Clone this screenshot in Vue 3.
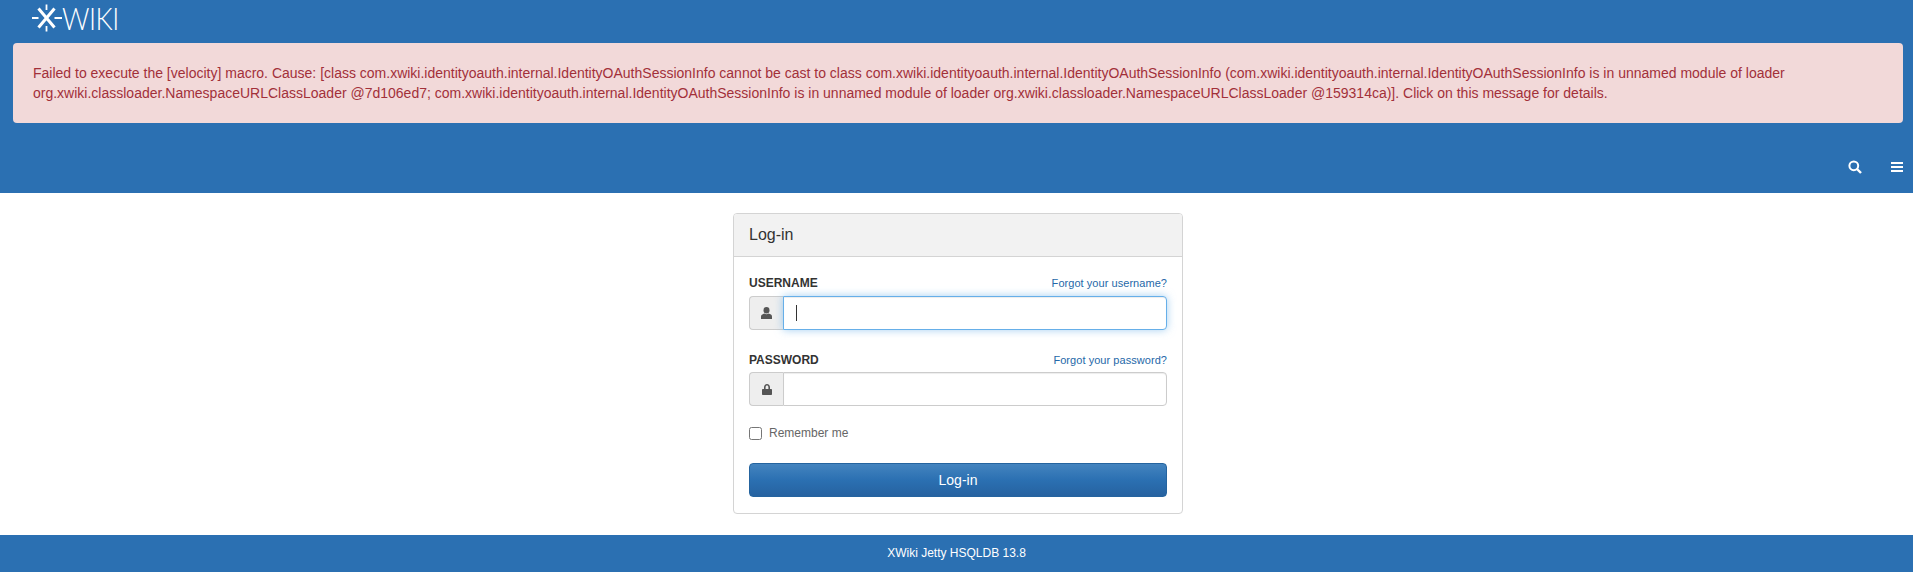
<template>
  <div class="page">
    <header class="top">
      <a class="logo" href="#">
        <svg class="logo-mark" width="30" height="28" viewBox="0 0 30 28" fill="none" stroke="#fff">
          <path d="M6.5 4.5 L22.5 23.5 M22.5 4.5 L6.5 23.5" stroke-width="3" />
          <path d="M14.5 0.5 V6 M14.5 22 V27.5" stroke-width="1.8" />
          <path d="M0 14 H6.5 M22.5 14 H30" stroke-width="1.8" />
        </svg>
        <span class="logo-text">WIKI</span>
      </a>
      <div class="alert">
        Failed to execute the [velocity] macro. Cause: [class com.xwiki.identityoauth.internal.IdentityOAuthSessionInfo cannot be cast to class com.xwiki.identityoauth.internal.IdentityOAuthSessionInfo (com.xwiki.identityoauth.internal.IdentityOAuthSessionInfo is in unnamed module of loader org.xwiki.classloader.NamespaceURLClassLoader @7d106ed7; com.xwiki.identityoauth.internal.IdentityOAuthSessionInfo is in unnamed module of loader org.xwiki.classloader.NamespaceURLClassLoader @159314ca)]. Click on this message for details.
      </div>
      <nav class="actions">
        <svg width="14" height="14" viewBox="0 0 14 14" fill="none" stroke="#fff">
          <circle cx="5.8" cy="5.8" r="4.4" stroke-width="2" />
          <path d="M9 9 L13 13" stroke-width="2.4" />
        </svg>
        <svg width="12" height="10" viewBox="0 0 12 10" fill="#fff">
          <rect y="0" width="12" height="2" />
          <rect y="4" width="12" height="2" />
          <rect y="8" width="12" height="2" />
        </svg>
      </nav>
    </header>

    <main class="content">
      <form class="panel" @submit.prevent>
        <h2 class="panel-title">Log-in</h2>
        <div class="panel-body">
          <div class="label-row">
            <label>Username</label>
            <a href="#">Forgot your username?</a>
          </div>
          <div class="input-group">
            <span class="addon">
              <svg width="11" height="12" viewBox="0 0 11 12" fill="#555">
                <ellipse cx="5.5" cy="3.3" rx="3" ry="3.3" />
                <path d="M0 12 V9.6 C0 7.8 1.6 7 3.4 6.6 C4.6 7.4 6.4 7.4 7.6 6.6 C9.4 7 11 7.8 11 9.6 V12 Z" />
              </svg>
            </span>
            <div class="field focused">
              <input type="text" />
              <span class="caret"></span>
            </div>
          </div>

          <div class="label-row second">
            <label>Password</label>
            <a href="#">Forgot your password?</a>
          </div>
          <div class="input-group">
            <span class="addon">
              <svg width="10" height="11" viewBox="0 0 10 11" fill="#555">
                <path d="M2 5 V3.2 C2 1.4 3.3 0 5 0 C6.7 0 8 1.4 8 3.2 V5 H9 C9.6 5 10 5.4 10 6 V10 C10 10.6 9.6 11 9 11 H1 C0.4 11 0 10.6 0 10 V6 C0 5.4 0.4 5 1 5 Z M3.6 5 H6.4 V3.2 C6.4 2.3 5.8 1.6 5 1.6 C4.2 1.6 3.6 2.3 3.6 3.2 Z" fill-rule="evenodd" />
              </svg>
            </span>
            <div class="field">
              <input type="password" />
            </div>
          </div>

          <label class="remember">
            <input type="checkbox" />
            <span>Remember me</span>
          </label>

          <button class="submit" type="submit">Log-in</button>
        </div>
      </form>
    </main>

    <footer class="foot">XWiki Jetty HSQLDB 13.8</footer>
  </div>
</template>

<script setup>
</script>

<style>
html,
body {
  margin: 0;
  background: #fff;
}
</style>

<style scoped>
.page {
  font-family: "Liberation Sans", Arial, sans-serif;
  font-size: 14px;
  line-height: 20px;
  color: #333;
}

.top {
  background: #2b70b2;
  height: 193px;
  padding: 4px 10px 0 13px;
  box-sizing: border-box;
  display: flex;
  flex-direction: column;
}

.logo {
  display: flex;
  align-items: center;
  height: 28px;
  margin-left: 19px;
  margin-bottom: 11px;
  text-decoration: none;
}

.logo-text {
  font-family: Lato, "Liberation Sans", sans-serif;
  font-weight: 300;
  font-size: 31px;
  line-height: 28px;
  letter-spacing: -0.5px;
  color: #fff;
  transform: scaleX(0.87);
  transform-origin: left center;
}

.alert {
  background: #f2d9d9;
  color: #a23039;
  border-radius: 4px;
  padding: 20px;
  height: 80px;
  box-sizing: border-box;
}

.actions {
  display: flex;
  justify-content: flex-end;
  align-items: center;
  gap: 29px;
  margin-top: 37px;
}

.content {
  display: flex;
  justify-content: center;
  padding-top: 20px;
  padding-bottom: 21px;
  padding-left: 3px;
}

.panel {
  width: 450px;
  box-sizing: border-box;
  border: 1px solid #d4d4d4;
  border-radius: 4px;
  background: #fff;
  overflow: hidden;
}

.panel-title {
  margin: 0;
  height: 43px;
  box-sizing: border-box;
  padding: 12px 15px;
  background: #f2f2f2;
  border-bottom: 1px solid #d4d4d4;
  font-size: 16px;
  font-weight: 400;
  line-height: 18px;
  color: #333;
}

.panel-body {
  padding: 16px 15px 16px;
}

.label-row {
  display: flex;
  justify-content: space-between;
  align-items: center;
  height: 20px;
  margin-bottom: 3px;
}

.label-row.second {
  margin-top: 20px;
  margin-bottom: 2px;
}

.label-row label {
  font-size: 12px;
  font-weight: 700;
  text-transform: uppercase;
  color: #333;
}

.label-row a {
  font-size: 11px;
  letter-spacing: 0.05px;
  color: #2568a8;
  text-decoration: none;
}

.input-group {
  display: flex;
  height: 34px;
}

.addon {
  width: 34px;
  flex: none;
  box-sizing: border-box;
  display: flex;
  align-items: center;
  justify-content: center;
  background: #eee;
  border: 1px solid #ccc;
  border-right: 0;
  border-radius: 4px 0 0 4px;
}

.field {
  flex: 1;
  position: relative;
  display: flex;
}

.field input {
  flex: 1;
  width: 100%;
  box-sizing: border-box;
  margin: 0;
  padding: 6px 12px;
  border: 1px solid #ccc;
  border-radius: 0 4px 4px 0;
  background: #fff;
  outline: none;
  box-shadow: inset 0 1px 1px rgba(0, 0, 0, 0.075);
}

.field.focused input {
  border-color: #66afe9;
  box-shadow: inset 0 1px 1px rgba(0, 0, 0, 0.075), 0 0 8px rgba(102, 175, 233, 0.6);
}

.caret {
  position: absolute;
  left: 13px;
  top: 9px;
  width: 1px;
  height: 16px;
  background: #333;
}

.remember {
  display: flex;
  align-items: center;
  gap: 7px;
  margin-top: 17px;
  height: 20px;
  font-size: 12px;
  color: #666;
}

.remember input {
  appearance: none;
  -webkit-appearance: none;
  width: 13px;
  height: 13px;
  margin: 0;
  box-sizing: border-box;
  background: #fff;
  border: 1px solid #767676;
  border-radius: 2.5px;
}

.submit {
  display: block;
  width: 100%;
  height: 34px;
  margin-top: 20px;
  padding: 0;
  border: 1px solid #25649f;
  border-radius: 4px;
  background: linear-gradient(to bottom, #4484bf 0%, #2b70b2 50%, #2662a0 100%);
  color: #fff;
  font-family: inherit;
  font-size: 14px;
}

.foot {
  height: 37px;
  line-height: 37px;
  margin-bottom: 3px;
  background: #2b70b2;
  color: #fff;
  font-size: 12px;
  text-align: center;
}
</style>
